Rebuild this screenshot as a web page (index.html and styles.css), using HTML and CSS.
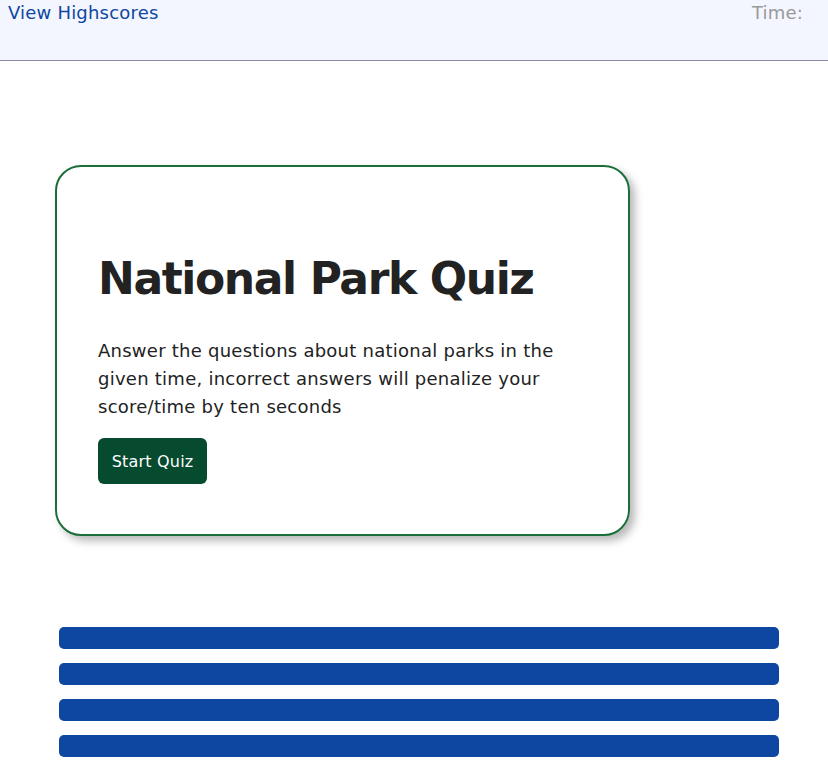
FILE: index.html
```html
<!DOCTYPE html>
<html>
<head>
<meta charset="utf-8">
<link rel="stylesheet" href="styles.css">
</head>
<body>
<header class="topbar">
  <a class="highscores" href="#">View Highscores</a>
  <span class="timer">Time:</span>
</header>
<main class="main">
  <section class="card">
    <h1 class="title">National Park Quiz</h1>
    <p class="intro">Answer the questions about national parks in the given time, incorrect answers will penalize your score/time by ten seconds</p>
    <button class="start">Start Quiz</button>
  </section>
  <div class="bars">
    <div class="bar"></div>
    <div class="bar"></div>
    <div class="bar"></div>
    <div class="bar"></div>
  </div>
</main>
</body>
</html>
```

FILE: styles.css
```css
* { box-sizing: border-box; }
html, body { margin: 0; padding: 0; background: #fff; }
body { font-family: Verdana, "DejaVu Sans", sans-serif; color: #222; }

.topbar {
  height: 61px;
  background: #f3f6fe;
  border-bottom: 1px solid #8a8aa6;
  display: flex;
  justify-content: space-between;
  align-items: flex-start;
  padding: 2px 25px 0 8px;
  font-size: 18px;
  letter-spacing: 0.2px;
}
.highscores { color: #0d47a1; text-decoration: none; }
.timer { color: #999; }

.main { padding: 104px 0 0 55px; }

.card {
  width: 575px;
  height: 371px;
  border: 2px solid #1a6e3a;
  border-radius: 26px;
  box-shadow: 5px 5px 9px rgba(0,0,0,0.28);
  padding: 86px 40px 0 41px;
}
.title {
  margin: 0 0 32px;
  font-size: 44px;
  font-weight: bold;
  letter-spacing: -1.4px;
  line-height: 52px;
  color: #222;
}
.intro {
  margin: 0 0 17px;
  font-size: 18px;
  line-height: 28px;
  letter-spacing: 0.25px;
}
.start {
  font-family: inherit;
  font-size: 16px;
  letter-spacing: 0.2px;
  color: #fff;
  background: #064a2f;
  border: none;
  border-radius: 6px;
  width: 109px;
  height: 46px;
  padding: 0;
}

.bars {
  margin: 91px 0 0 4px;
  width: 720px;
  display: flex;
  flex-direction: column;
  gap: 14px;
}
.bar { height: 22px; background: #0d47a1; border-radius: 5px; }
```
